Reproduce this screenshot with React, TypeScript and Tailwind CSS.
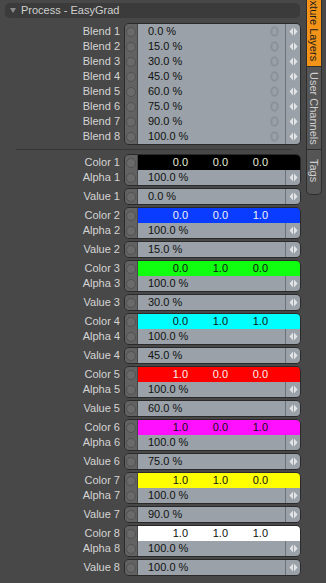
const blends = ["0.0 %", "15.0 %", "30.0 %", "45.0 %", "60.0 %", "75.0 %", "90.0 %", "100.0 %"];

const colors = [
  { bg: "bg-[#000000]", fg: "text-[#e6ecd8]", vals: ["0.0", "0.0", "0.0"] },
  { bg: "bg-[#0a3cff]", fg: "text-[#f4f4f4]", vals: ["0.0", "0.0", "1.0"] },
  { bg: "bg-[#10ff10]", fg: "text-[#111111]", vals: ["0.0", "1.0", "0.0"] },
  { bg: "bg-[#00ffff]", fg: "text-[#111111]", vals: ["0.0", "1.0", "1.0"] },
  { bg: "bg-[#ff0000]", fg: "text-[#f4f4f4]", vals: ["1.0", "0.0", "0.0"] },
  { bg: "bg-[#ff10ff]", fg: "text-[#111111]", vals: ["1.0", "0.0", "1.0"] },
  { bg: "bg-[#ffff00]", fg: "text-[#111111]", vals: ["1.0", "1.0", "0.0"] },
  { bg: "bg-[#ffffff]", fg: "text-[#111111]", vals: ["1.0", "1.0", "1.0"] },
];

function Knob() {
  return (
    <div className="w-[13px] h-full shrink-0 flex items-center justify-center bg-[#626262] border-r border-[#454545]">
      <div className="w-[10px] h-[10px] rounded-full border border-[#525252] bg-[#6a6a6a]" />
    </div>
  );
}

function Arrows() {
  return (
    <div className="w-[15px] h-full shrink-0 flex items-center justify-center border-l border-[#6c7278]">
      <svg width="9" height="9" viewBox="0 0 9 9">
        <path d="M4 0.5 L0.5 4.5 L4 8.5 Z M5 0.5 L8.5 4.5 L5 8.5 Z" fill="#e2e4e6" />
      </svg>
    </div>
  );
}

function Ring() {
  return (
    <svg width="9" height="11" viewBox="0 0 9 11" className="mr-[6px]">
      <ellipse cx="4.5" cy="5.5" rx="3.2" ry="4.2" fill="none" stroke="#8b9197" strokeWidth="2" />
    </svg>
  );
}

function FieldRow({ text, ring }: { text: string; ring?: boolean }) {
  return (
    <div className="h-[15px] flex items-stretch">
      <Knob />
      <div className="flex-1 flex items-center bg-[#9aa1a8] text-[#111]">
        <span className="pl-[10px] flex-1">{text}</span>
        {ring && <Ring />}
      </div>
      <div className="bg-[#9aa1a8] h-full">
        <Arrows />
      </div>
    </div>
  );
}

function Label({ text }: { text: string }) {
  return <div className="h-[15px] leading-[15px] text-right text-[#d4d4d4]">{text}</div>;
}

function ColorGroup({ i }: { i: number }) {
  const c = colors[i];
  const n = i + 1;
  return (
    <div className="flex flex-col">
      <div className="flex">
        <div className="w-[115px] pt-[1px] flex flex-col">
          <Label text={`Color ${n}`} />
          <Label text={`Alpha ${n}`} />
        </div>
        <div className="ml-[4px] w-[177px] border border-[#2a2a2a] rounded-[5px] overflow-hidden">
          <div className="h-[15px] flex items-stretch">
            <Knob />
            <div className={`flex-1 flex items-center ${c.bg} ${c.fg}`}>
              <span className="w-[50px] text-right">{c.vals[0]}</span>
              <span className="w-[40px] text-right">{c.vals[1]}</span>
              <span className="w-[40px] text-right">{c.vals[2]}</span>
            </div>
          </div>
          <FieldRow text="100.0 %" />
        </div>
      </div>
      <div className="flex mt-[2px] mb-[2px]">
        <div className="w-[115px] pt-[1px]">
          <Label text={`Value ${n}`} />
        </div>
        <div className="ml-[4px] w-[177px] border border-[#2a2a2a] rounded-[5px] overflow-hidden">
          <FieldRow text={blends[i]} />
        </div>
      </div>
    </div>
  );
}

export default function App() {
  return (
    <div
      className="w-[326px] h-[583px] bg-[#484848] flex overflow-hidden text-[11px]"
      style={{ fontFamily: '"Liberation Sans", Arial, sans-serif' }}
    >
      {/* Properties panel */}
      <div className="w-[303px] shrink-0 pl-[5px] pt-[3px] flex flex-col">
        <div className="w-[295px] h-[15px] rounded-[5px] bg-[#3b3b3b] flex items-center text-[#cfcfcf]">
          <svg width="6" height="5" viewBox="0 0 6 5" className="ml-[5px] mr-[5px]">
            <path d="M0 0 L6 0 L3 5 Z" fill="#8a8a8a" />
          </svg>
          <span>Process - EasyGrad</span>
        </div>

        <div className="flex mt-[5px]">
          <div className="w-[115px] pt-[1px] flex flex-col">
            {blends.map((_, i) => (
              <Label key={i} text={`Blend ${i + 1}`} />
            ))}
          </div>
          <div className="ml-[4px] w-[177px] border border-[#2a2a2a] rounded-[5px] overflow-hidden">
            {blends.map((b, i) => (
              <FieldRow key={i} text={b} ring />
            ))}
          </div>
        </div>

        <div className="ml-[11px] w-[276px] h-px bg-[#363636] mt-[4px] mb-[4px]" />

        {colors.map((_, i) => (
          <ColorGroup key={i} i={i} />
        ))}
      </div>

      {/* Side tabs */}
      <div className="flex flex-col pl-[3px] w-[18px]">
        <div className="h-[67px] w-[16px] bg-[#f39419] border border-[#2e2e2e] border-t-0 flex flex-col justify-end items-center overflow-hidden">
          <span className="[writing-mode:vertical-rl] text-[#1b1b1b] pb-[5px] whitespace-nowrap">Texture Layers</span>
        </div>
        <div className="h-[83px] w-[16px] bg-[#555555] border border-[#2e2e2e] border-t-0 flex flex-col items-center">
          <span className="[writing-mode:vertical-rl] text-[#cfcfcf] pt-[5px] whitespace-nowrap">User Channels</span>
        </div>
        <div className="h-[45px] w-[16px] bg-[#555555] border border-[#2e2e2e] border-t-0 rounded-b-[5px] flex flex-col items-center">
          <span className="[writing-mode:vertical-rl] text-[#cfcfcf] pt-[9px] whitespace-nowrap">Tags</span>
        </div>
      </div>
    </div>
  );
}
